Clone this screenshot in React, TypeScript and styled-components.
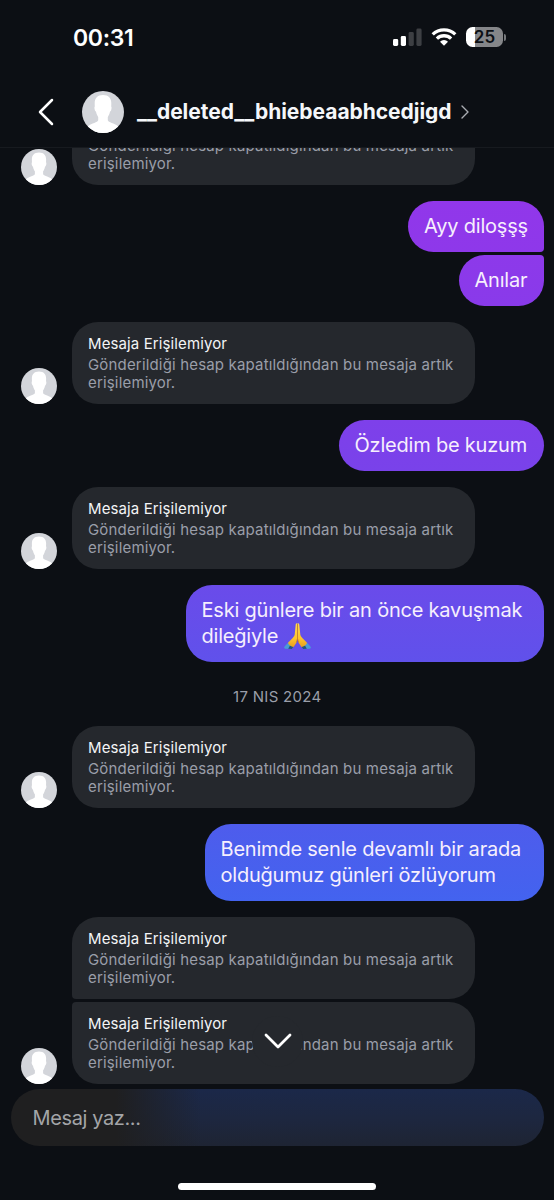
import React from "react";
import styled, { createGlobalStyle } from "styled-components";

const GlobalStyle = createGlobalStyle`
  * { box-sizing: border-box; }
  body {
    margin: 0;
    background: #0c0f14;
    font-family: Inter, "Noto Sans", sans-serif;
    color: #f5f7fa;
  }
`;

const Screen = styled.main`
  width: 554px;
  height: 1200px;
  display: flex;
  flex-direction: column;
  overflow: hidden;
  background: #0c0f14;
`;

const StatusBar = styled.div`
  height: 76px;
  flex: none;
  display: flex;
  align-items: center;
  justify-content: space-between;
  padding: 0 48px 0 73px;
`;

const Clock = styled.span`
  font-size: 23px;
  font-weight: 600;
  line-height: 28px;
  letter-spacing: -0.35px;
  color: #fff;
`;

const StatusIcons = styled.div`
  display: flex;
  align-items: center;
  gap: 9px;
  margin-top: -2px;
`;

const Battery = styled.div`
  display: flex;
  align-items: center;
  gap: 1px;
`;

const BatteryBody = styled.div`
  width: 37px;
  height: 20px;
  border-radius: 6.5px;
  background: linear-gradient(to right, #fff 9px, #858689 9px);
  color: #0c0f14;
  font-size: 17px;
  font-weight: 600;
  line-height: 20px;
  text-align: center;
`;

const BatteryTip = styled.div`
  width: 2px;
  height: 7px;
  border-radius: 0 2px 2px 0;
  background: #77797c;
`;

const Header = styled.header`
  height: 72px;
  flex: none;
  display: flex;
  align-items: center;
  padding-left: 38px;
  border-bottom: 1px solid #171a1f;
`;

const UserName = styled.h1`
  margin: 1px 9px 0 13px;
  font-size: 21px;
  line-height: 28px;
  font-weight: 700;
  letter-spacing: -0.03px;
  color: #f5f7fa;
`;

const AvatarSvg = styled.svg<{ $size: number }>`
  width: ${(p) => p.$size}px;
  height: ${(p) => p.$size}px;
  flex: none;
  display: block;
`;

const HeaderAvatar = styled.div`
  margin-left: 28px;
`;

const Thread = styled.section`
  height: 936px;
  flex: none;
  display: flex;
  flex-direction: column;
  justify-content: flex-end;
  gap: 16px;
  padding: 0 10.5px 0 21px;
  overflow: hidden;
`;

const Group = styled.div<{ $own?: boolean }>`
  flex: none;
  display: flex;
  flex-direction: column;
  align-items: ${(p) => (p.$own ? "flex-end" : "stretch")};
  gap: 3px;
`;

const IncomingRow = styled.div`
  display: flex;
  align-items: flex-end;
  gap: 15px;
`;

const AvatarSlot = styled.div`
  width: 36px;
  flex: none;
`;

type Join = "none" | "top" | "bottom";

const IncomingBubble = styled.article<{ $join: Join }>`
  position: relative;
  width: 403px;
  height: 82px;
  display: flex;
  flex-direction: column;
  justify-content: flex-end;
  padding: 0 16px 12px;
  border-radius: ${(p) =>
    p.$join === "bottom" ? "26px 26px 26px 4px" : p.$join === "top" ? "4px 26px 26px 26px" : "26px"};
  background: #25282d;
`;

const BubbleTitle = styled.div`
  margin-bottom: 2px;
  font-size: 15px;
  line-height: 21px;
  letter-spacing: 0.11px;
  color: #f3f4f6;
  white-space: nowrap;
`;

const BubbleBody = styled.div`
  font-size: 15px;
  line-height: 18px;
  letter-spacing: 0.17px;
  color: #9a9ea9;
  white-space: nowrap;
`;

const OwnBubble = styled.article<{ $from: string; $to: string; $join?: Join; $width: number }>`
  width: ${(p) => p.$width}px;
  padding: 12px 0 13px 16px;
  border-radius: ${(p) =>
    p.$join === "bottom" ? "26px 26px 4px 26px" : p.$join === "top" ? "26px 4px 26px 26px" : "26px"};
  background: linear-gradient(${(p) => p.$from}, ${(p) => p.$to});
  font-size: 20px;
  line-height: 26px;
  letter-spacing: -0.21px;
  color: #f6effd;
  white-space: nowrap;
`;

const DateLabel = styled.time`
  flex: none;
  height: 32px;
  padding-right: 10px;
  text-align: center;
  font-size: 15px;
  line-height: 38px;
  letter-spacing: 0.3px;
  color: #9a9ea9;
`;

const JumpButton = styled.button`
  position: absolute;
  left: 180px;
  top: 14px;
  width: 51px;
  height: 51px;
  border: 0;
  padding: 0;
  border-radius: 50%;
  background: #25282d;
  display: grid;
  place-items: center;
`;

const Composer = styled.div`
  flex: none;
  height: 57px;
  margin: 5px 10.5px 0;
  padding-left: 22px;
  border-radius: 29px;
  display: flex;
  align-items: center;
  background:
    linear-gradient(to right, #1f1f20 105px, rgba(31, 31, 32, 0) 190px),
    linear-gradient(#1b2849, #1d2740 50%, #1e2433);
  font-size: 20px;
  letter-spacing: -0.38px;
  color: #a3a5a8;
`;

const HomeIndicator = styled.div`
  flex: none;
  width: 198px;
  height: 7px;
  margin: 37px auto 0 178px;
  border-radius: 4px;
  background: #fff;
`;

const Emoji = styled.svg`
  width: 27px;
  height: 26px;
  margin-left: 6px;
  vertical-align: -6px;
`;

function Avatar({ size }: { size: number }) {
  const id = `avatar-clip-${React.useId()}`;
  return (
    <AvatarSvg $size={size} viewBox="0 0 42 42" aria-hidden="true">
      <clipPath id={id}>
        <circle cx="21" cy="21" r="21" />
      </clipPath>
      <g clipPath={`url(#${id})`}>
        <rect width="42" height="42" fill="#d3d5da" />
        <path
          fill="#fff"
          d="M21 4c-5.600 0-8.300 3.300-8.300 8 0 1.200 0 2.600.1 3.600-.6.400-.4 2.200 0 3.400.3 1 .8 1.400 1.200 1.600.4 2.400 1.200 4 2.200 5.300v3.300c-.4 2.300-6.700 2.800-10 5.800L3 43h36l-3.200-8c-3.300-3-9.600-3.500-10-5.800v-3.300c1-1.300 1.800-2.900 2.200-5.300.4-.2.900-.6 1.200-1.600.4-1.200.6-3 0-3.400.1-1 .1-2.400.1-3.600 0-4.700-2.700-8-8.300-8Z"
        />
      </g>
    </AvatarSvg>
  );
}

function FoldedHands() {
  return (
    <Emoji viewBox="0 0 27 26" role="img" aria-label="🙏">
      <defs>
        <linearGradient id="skin" x1="0" y1="0" x2="0" y2="1">
          <stop offset="0" stopColor="#ffdc4d" />
          <stop offset="0.65" stopColor="#fdc22d" />
          <stop offset="1" stopColor="#e89f20" />
        </linearGradient>
      </defs>
      <path fill="#4a9bd6" d="M4.200 19.600.6 23.400c-.9 1-.5 2.300.8 2.400l6 .1 2-2.300Z" />
      <path fill="#4a9bd6" d="m22.800 19.600 3.600 3.800c.9 1 .5 2.300-.8 2.400l-6 .1-2-2.300Z" />
      <path fill="#24557c" d="m6 22.600 3.800.6-2 2.700-3.600-.1ZM21 22.600l-3.800.6 2 2.700 3.600-.1Z" />
      <path
        fill="url(#skin)"
        d="M13.300.3c-1-.1-1.500.4-1.600 1.500l-1 9.700c-.1 1.200-.9 2.200-2 3.400L4 19.700c.5 1.900 3.400 4.300 5.600 4.200l2.800-4.200 1.100-4.200Z"
      />
      <path
        fill="url(#skin)"
        d="M13.700.3c1-.1 1.500.4 1.600 1.500l1 9.700c.1 1.200.9 2.200 2 3.400l4.700 4.800c-.5 1.900-3.400 4.300-5.600 4.200l-2.800-4.200-1.100-4.200Z"
      />
      <path fill="none" stroke="#c47a1a" strokeWidth="0.7" d="M13.500 1v14.500l-1.100 4M13.500 15.500l1.100 4" />
    </Emoji>
  );
}

function Unavailable({
  avatar = true,
  title = "Mesaja Erişilemiyor",
  join = "none",
  children,
}: {
  avatar?: boolean;
  title?: string | null;
  join?: Join;
  children?: React.ReactNode;
}) {
  return (
    <IncomingRow>
      <AvatarSlot>{avatar && <Avatar size={36} />}</AvatarSlot>
      <IncomingBubble $join={join}>
        {title && <BubbleTitle>{title}</BubbleTitle>}
        <BubbleBody>
          Gönderildiği hesap kapatıldığından bu mesaja artık
          <br />
          erişilemiyor.
        </BubbleBody>
        {children}
      </IncomingBubble>
    </IncomingRow>
  );
}

export default function App() {
  return (
    <Screen>
      <GlobalStyle />
      <StatusBar>
        <Clock>00:31</Clock>
        <StatusIcons>
          <svg width="29" height="18" viewBox="0 0 29 18" aria-hidden="true">
            <rect x="0" y="11" width="5.200" height="7" rx="1.400" fill="#fff" />
            <rect x="7.800" y="8" width="5.200" height="10" rx="1.400" fill="#fff" />
            <rect x="15.600" y="4" width="5.200" height="14" rx="1.400" fill="#3d3f43" />
            <rect x="23.400" y="0.500" width="5.200" height="17.500" rx="1.400" fill="#3d3f43" />
          </svg>
          <svg width="26" height="18" viewBox="0 0 26 18" fill="none" stroke="#fff" strokeWidth="3.300" aria-hidden="true">
            <path d="M1.700 6.400a16.200 16.200 0 0 1 22.600 0" />
            <path d="M5.900 10.600a10.300 10.300 0 0 1 14.200 0" />
            <path d="M9 13.700a5.800 5.800 0 0 1 8 0L13 17.800Z" fill="#fff" stroke="none" />
          </svg>
          <Battery>
            <BatteryBody>25</BatteryBody>
            <BatteryTip />
          </Battery>
        </StatusIcons>
      </StatusBar>
      <Header>
        <svg width="16" height="28" viewBox="0 0 16 28" fill="none" aria-label="Geri">
          <path d="M14 2 2 14l12 12" stroke="#fff" strokeWidth="2.500" strokeLinecap="round" strokeLinejoin="round" />
        </svg>
        <HeaderAvatar>
          <Avatar size={42} />
        </HeaderAvatar>
        <UserName>__deleted__bhiebeaabhcedjigd</UserName>
        <svg width="8" height="14" viewBox="0 0 8 14" fill="none" aria-hidden="true">
          <path d="m1 1 6 6-6 6" stroke="#a9acb2" strokeWidth="1.400" strokeLinecap="round" strokeLinejoin="round" />
        </svg>
      </Header>
      <Thread>
        <Group>
          <Unavailable title={null} />
        </Group>
        <Group $own>
          <OwnBubble $width={135.5} $from="#9137ea" $to="#8e38ea" $join="bottom">
            Ayy diloşşş
          </OwnBubble>
          <OwnBubble $width={85} $from="#8d39ea" $to="#893aea" $join="top">
            Anılar
          </OwnBubble>
        </Group>
        <Group>
          <Unavailable />
        </Group>
        <Group $own>
          <OwnBubble $width={205} $from="#7e40ea" $to="#7942ea">
            Özledim be kuzum
          </OwnBubble>
        </Group>
        <Group>
          <Unavailable />
        </Group>
        <Group $own>
          <OwnBubble $width={358} $from="#6a4bea" $to="#6051eb">
            Eski günlere bir an önce kavuşmak
            <br />
            dileğiyle
            <FoldedHands />
          </OwnBubble>
        </Group>
        <DateLabel>17 NIS 2024</DateLabel>
        <Group>
          <Unavailable />
        </Group>
        <Group $own>
          <OwnBubble $width={339} $from="#4e5cec" $to="#4363ef">
            Benimde senle devamlı bir arada
            <br />
            olduğumuz günleri özlüyorum
          </OwnBubble>
        </Group>
        <Group>
          <Unavailable avatar={false} join="bottom" />
          <Unavailable join="top">
            <JumpButton aria-label="En alta git">
              <svg width="28" height="17" viewBox="0 0 28 17" fill="none">
                <path d="m2 2 12 12L26 2" stroke="#fff" strokeWidth="2.800" strokeLinecap="round" strokeLinejoin="round" />
              </svg>
            </JumpButton>
          </Unavailable>
        </Group>
      </Thread>
      <Composer>Mesaj yaz...</Composer>
      <HomeIndicator />
    </Screen>
  );
}
